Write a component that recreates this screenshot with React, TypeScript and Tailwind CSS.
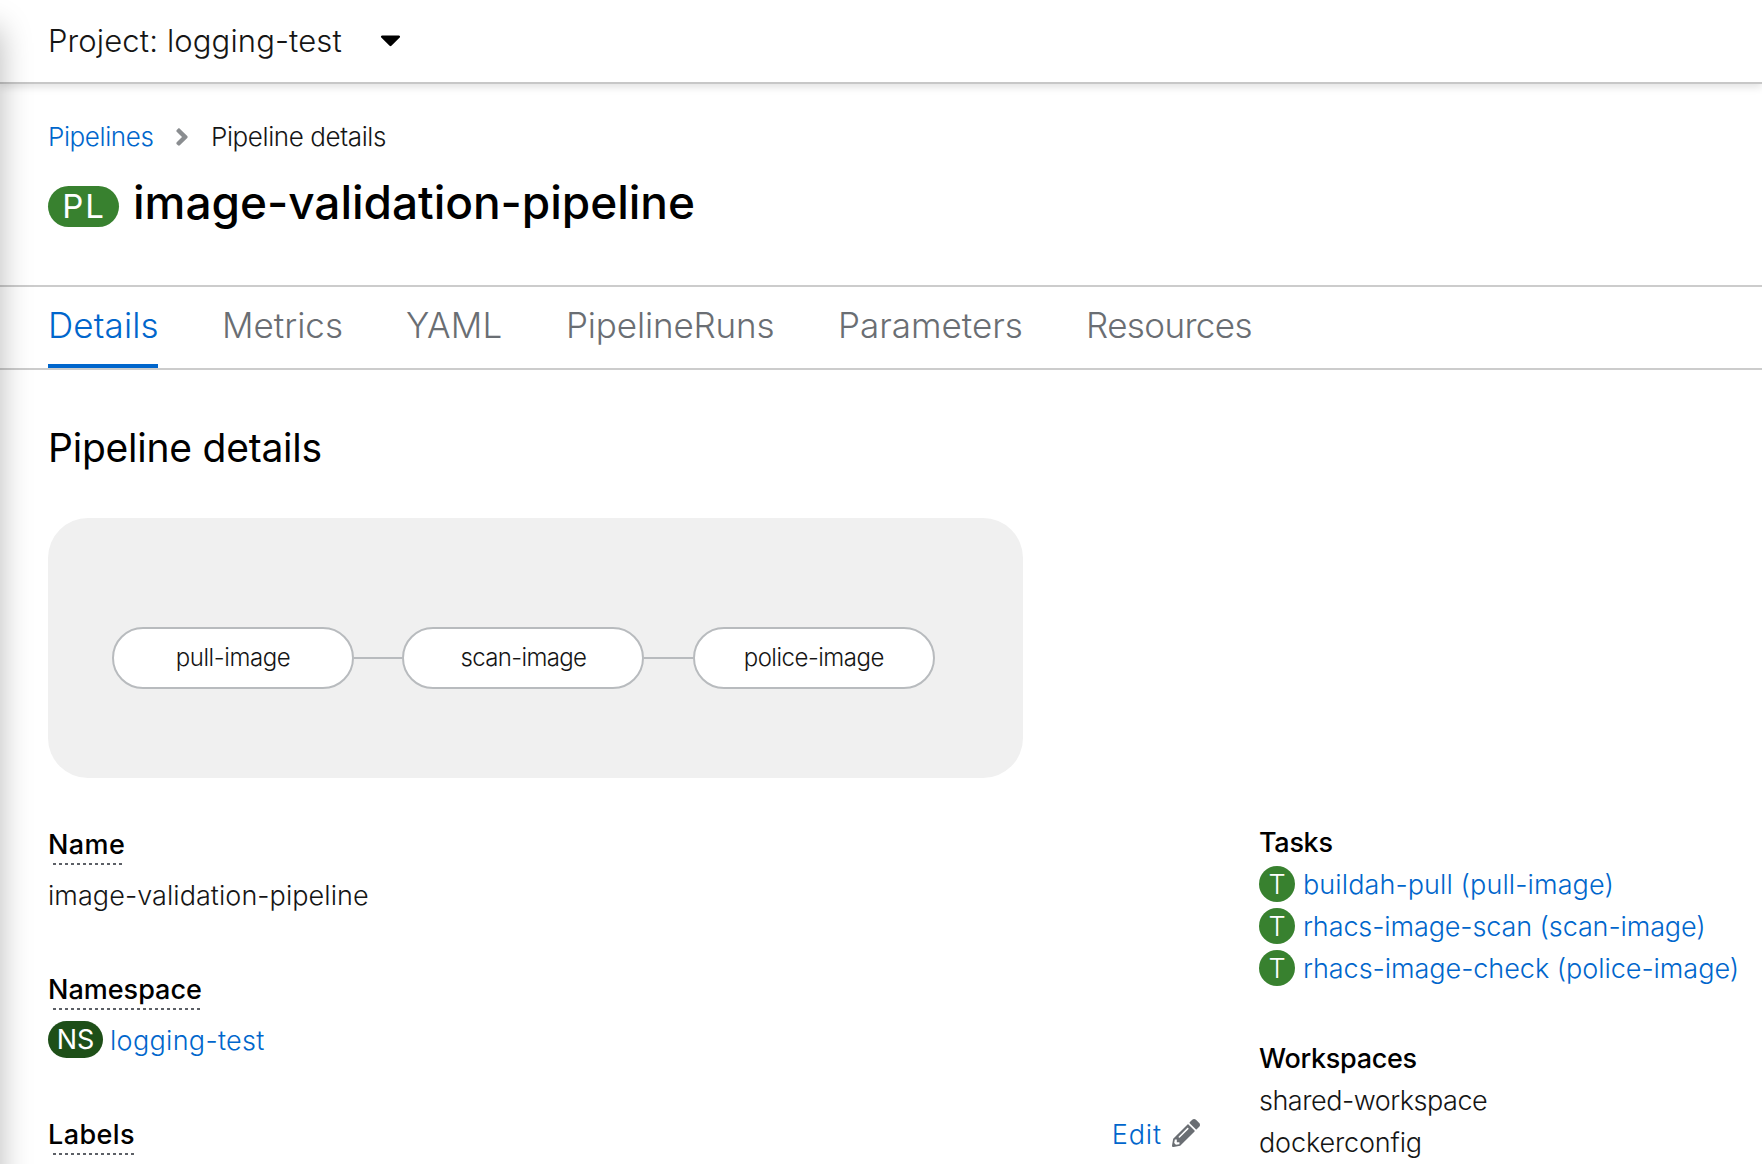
import React from 'react';
import { FaAngleRight, FaCaretDown, FaPencilAlt } from 'react-icons/fa';

const tabs = [
  { label: 'Details', cls: 'w-[110px] text-[#0066cc] border-[#0066cc] tracking-[0.15px]' },
  { label: 'Metrics', cls: 'w-[121px] text-[#6a6e73] border-transparent' },
  { label: 'YAML', cls: 'w-[94px] -indent-px text-[#6a6e73] border-transparent tracking-[0.2px]' },
  { label: 'PipelineRuns', cls: 'w-[208px] indent-px text-[#6a6e73] border-transparent tracking-[-0.15px]' },
  { label: 'Parameters', cls: 'w-[184px] indent-px text-[#6a6e73] border-transparent' },
  { label: 'Resources', cls: 'w-[168px] indent-px text-[#6a6e73] border-transparent tracking-[-0.6px]' },
];

const nodes = [
  { label: 'pull-image', cls: 'tracking-[-0.4px]' },
  { label: 'scan-image', cls: 'tracking-[-0.65px]' },
  { label: 'police-image', cls: 'tracking-[-0.5px]' },
];

const tasks = [
  { label: 'buildah-pull (pull-image)', cls: 'tracking-[0.1px]' },
  { label: 'rhacs-image-scan (scan-image)', cls: 'tracking-[-0.11px]' },
  { label: 'rhacs-image-check (police-image)', cls: 'tracking-[-0.04px]' },
];

function Term({ label, cls, dots }: { label: string; cls: string; dots: string }) {
  return (
    <div className="flex h-[42px] flex-col items-start">
      <span className={`h-[39px] font-medium leading-[42px] text-black ${cls}`}>{label}</span>
      <span
        className={`ml-[5px] h-[2px] bg-[repeating-linear-gradient(90deg,#5c6066_0,#5c6066_3px,transparent_3px,transparent_6px)] ${dots}`}
      />
    </div>
  );
}

export default function App() {
  return (
    <div className="relative h-[1164px] w-[1762px] overflow-hidden bg-white font-['Inter',sans-serif] text-[27px] font-light leading-[42px] text-[#151515]">
      <header className="relative flex h-[84px] items-center border-b-2 border-[#c7c7c7] bg-white pl-12 text-[31px] text-[#151515] shadow-[0_3px_8px_rgba(0,0,0,0.12)]">
        <span className="w-[326px] tracking-[0.13px]">Project: logging-test</span>
        <FaCaretDown className="-mt-[3px] h-[33px] w-[33px] text-black" />
      </header>

      <section className="flex h-[201px] flex-col px-12 pt-[33px]">
        <nav className="flex h-[39px] items-center text-[26px] leading-[39px] tracking-[-0.4px]">
          <a className="w-[120px] text-[#0066cc]">Pipelines</a>
          <FaAngleRight className="h-[28px] w-[28px] text-[#8a8d90]" />
          <span className="ml-[15px]">Pipeline details</span>
        </nav>
        <h1 className="mt-4 flex h-[60px] items-center text-[46px] font-medium leading-[60px] text-black">
          <span className="mt-[9px] flex h-[41px] w-[71px] items-center justify-center rounded-full bg-[#38812f] pl-px text-[33px] font-normal leading-none tracking-[2px] text-white">
            <span className="-mt-px">PL</span>
          </span>
          <span className="-mt-px ml-[14px] tracking-[-0.03px]">image-validation-pipeline</span>
        </h1>
      </section>

      <nav className="flex h-[85px] gap-16 border-y-2 border-[#cccccc] pl-12 text-[35px] leading-[77px]">
        {tabs.map((t) => (
          <a key={t.label} className={`h-[81px] whitespace-nowrap border-b-4 ${t.cls}`}>
            {t.label}
          </a>
        ))}
      </nav>

      <main className="px-12 pt-[52px]">
        <h2 className="text-[39px] font-normal leading-[52px] tracking-[-0.23px] text-black">Pipeline details</h2>
        <div className="mt-[44px] flex h-[260px] w-[975px] items-center rounded-[40px] bg-[#f0f0f0] pl-16 pt-[19px]">
          {nodes.map((n, i) => (
            <React.Fragment key={n.label}>
              {i > 0 && <div className="h-[2px] w-[48.4px] bg-[#b8bbbe]" />}
              <div
                className={`flex h-[62px] w-[242px] items-center justify-center rounded-full border-2 border-[#b8bbbe] bg-white text-[24px] leading-none ${n.cls}`}
              >
                {n.label}
              </div>
            </React.Fragment>
          ))}
        </div>

        <div className="mt-[44px] flex">
          <div className="w-[1153px] shrink-0 pt-[2px]">
            <Term label="Name" cls="tracking-[0.42px]" dots="w-[70px]" />
            <div className="mt-[9px] h-[42px] tracking-[0.06px]">image-validation-pipeline</div>
            <div className="mt-[52px]">
              <Term label="Namespace" cls="" dots="w-[147px]" />
            </div>
            <div className="mt-[8px] flex h-[42px] items-center">
              <span className="-mt-px flex h-[37px] w-[55px] items-center justify-center rounded-full bg-[#1e4f18] text-[27px] font-normal leading-none text-white">
                NS
              </span>
              <a className="ml-[7px] mt-px tracking-[0.3px] text-[#0066cc]">logging-test</a>
            </div>
            <div className="mt-[53px] flex justify-between">
              <Term label="Labels" cls="tracking-[0.4px]" dots="w-[81px]" />
              <a className="flex h-[42px] items-center pr-px text-[#0066cc]">
                <span className="tracking-[0.9px]">Edit</span>
                <FaPencilAlt className="-mt-[4px] ml-[10px] h-[28px] w-[28px] text-[#6a6e73]" />
              </a>
            </div>
          </div>

          <div className="ml-[58px] whitespace-nowrap">
            <div className="font-medium tracking-[-0.3px] text-black">Tasks</div>
            {tasks.map((t) => (
              <div key={t.label} className="flex h-[42px] items-center">
                <span className="-mt-[2px] flex size-[36px] items-center justify-center rounded-full bg-[#38812f] text-[27px] font-light leading-none text-white">
                  T
                </span>
                <a className={`ml-[8px] text-[#0066cc] ${t.cls}`}>{t.label}</a>
              </div>
            ))}
            <div className="mt-[48px] font-medium tracking-[-0.3px] text-black">Workspaces</div>
            <div className="tracking-[-0.48px]">shared-workspace</div>
            <div className="tracking-[-0.15px]">dockerconfig</div>
          </div>
        </div>
      </main>

      <div className="absolute -bottom-10 -left-10 top-7 w-10 shadow-[0_0_32px_rgba(0,0,0,0.28)]" />
    </div>
  );
}
